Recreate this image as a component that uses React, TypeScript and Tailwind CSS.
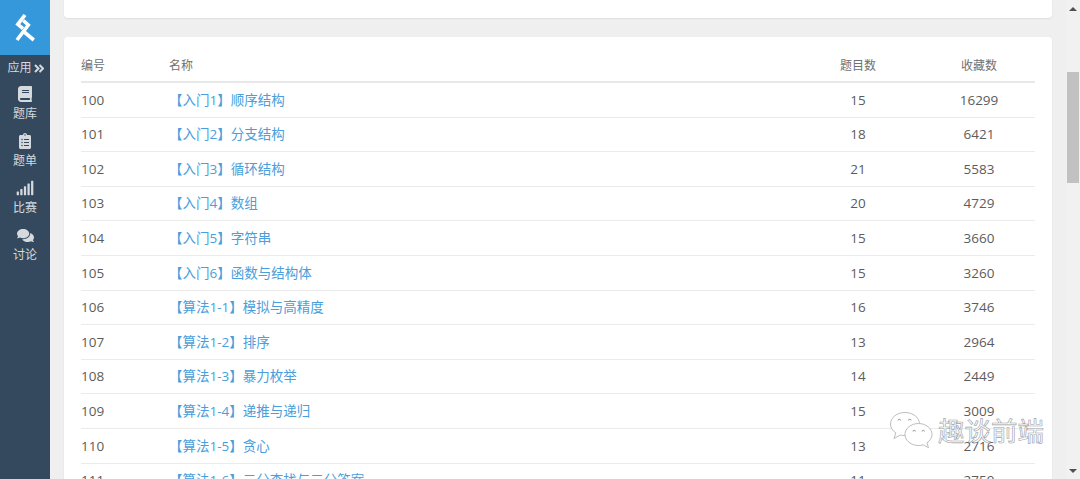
import { FaBook, FaClipboardList, FaSignal, FaComments } from 'react-icons/fa';

const rows = [
  { id: 100, name: '【入门1】顺序结构', count: 15, fav: 16299 },
  { id: 101, name: '【入门2】分支结构', count: 18, fav: 6421 },
  { id: 102, name: '【入门3】循环结构', count: 21, fav: 5583 },
  { id: 103, name: '【入门4】数组', count: 20, fav: 4729 },
  { id: 104, name: '【入门5】字符串', count: 15, fav: 3660 },
  { id: 105, name: '【入门6】函数与结构体', count: 15, fav: 3260 },
  { id: 106, name: '【算法1-1】模拟与高精度', count: 16, fav: 3746 },
  { id: 107, name: '【算法1-2】排序', count: 13, fav: 2964 },
  { id: 108, name: '【算法1-3】暴力枚举', count: 14, fav: 2449 },
  { id: 109, name: '【算法1-4】递推与递归', count: 15, fav: 3009 },
  { id: 110, name: '【算法1-5】贪心', count: 13, fav: 2716 },
  { id: 111, name: '【算法1-6】二分查找与二分答案', count: 11, fav: 2759 },
];

const navItems = [
  { label: '题库', icon: <FaBook size={16} /> },
  { label: '题单', icon: <FaClipboardList size={16} /> },
  { label: '比赛', icon: <FaSignal size={18} /> },
  { label: '讨论', icon: <FaComments size={17} /> },
];

const font = "font-['Open_Sans','Noto_Sans_CJK_SC',sans-serif]";

const Sidebar = () => (
  <aside className="w-[50px] shrink-0 bg-[#34495e] text-[#d5dade]">
    <div className="h-[55px] bg-[#3498db] flex items-center justify-center">
      <svg width="21" height="28" viewBox="15 14 21 28" fill="none" stroke="#fff" strokeWidth="3.6">
        <path d="M25 15 L17.800 24.300 L23 28.600" />
        <path d="M23.300 20.500 L28.300 25 L17 40" />
        <path d="M23 31 L33.800 40" />
      </svg>
    </div>
    <div className="h-[24px] pt-[2px] flex items-center justify-center text-[12px] gap-[2px] pl-[1px]">
      <span>应用</span>
      <svg width="10" height="9" viewBox="0 0 10 9" fill="none" stroke="currentColor" strokeWidth="2">
        <path d="M1 1 L4.500 4.500 L1 8" />
        <path d="M5.500 1 L9 4.500 L5.500 8" />
      </svg>
    </div>
    <div className="pt-[6px]">
      {navItems.map((item) => (
        <div key={item.label} className="h-[47px] flex flex-col items-center">
          <div className="h-[18px] flex items-center justify-center">{item.icon}</div>
          <span className="mt-[3px] text-[12px] leading-[16px]">{item.label}</span>
        </div>
      ))}
    </div>
  </aside>
);

const Watermark = () => (
  <div className="absolute left-[889px] top-[411px] flex items-start gap-[5px] pointer-events-none">
    <svg width="44" height="38" viewBox="0 0 44 38" fill="#ffffff" stroke="#bdbdbd" strokeWidth="1">
      <path d="M16 1.500C8 1.500 1.500 6.500 1.500 13c0 3.800 2.100 6.800 5.300 8.800L5 27.500l6.300-3.500c1.500.4 3 .6 4.700.6 8 0 14.500-5 14.500-11.600S24 1.500 16 1.500z" />
      <path d="M29.500 12.500c-7.400 0-13.500 4.900-13.500 11s6.100 11 13.500 11c1.600 0 3.100-.2 4.600-.7l5.400 2.900-1.600-5c3.200-2 5.100-5 5.100-8.200 0-6.100-6.100-11-13.500-11z" />
      <path d="M9 9.500a1.300 1.300 0 0 1 2.600 0M19.500 9.500a1.300 1.300 0 0 1 2.600 0M24 20.500a1.200 1.200 0 0 1 2.400 0M33 20.500a1.200 1.200 0 0 1 2.400 0" fill="none" stroke="#999" />
    </svg>
    <span className="mt-[6px] text-[26.500px] leading-none text-white/70 font-['Noto_Sans_CJK_SC',sans-serif] [-webkit-text-stroke:0.6px_#a0a0a0]">
      趣谈前端
    </span>
  </div>
);

export default function App() {
  return (
    <div className={`relative h-[479px] w-[1080px] overflow-hidden flex bg-[#efefef] ${font}`}>
      <Sidebar />
      <main className="flex-1 px-[14px]">
        <div className="h-[18px] bg-white rounded-b-[4px] shadow-[0_1px_2px_rgba(0,0,0,0.07)]" />
        <section className="mt-[19px] bg-white rounded-[4px] px-[17px] pt-[16px] h-[460px] shadow-[0_1px_2px_rgba(0,0,0,0.07)]">
          <div className="grid grid-cols-[88px_624px_130px_112px] h-[30px] pb-[3px] items-center text-[12px] text-[#707070] border-b-2 border-[#e8e8e8]">
            <span>编号</span>
            <span>名称</span>
            <span className="text-center">题目数</span>
            <span className="text-center">收藏数</span>
          </div>
          {rows.map((row) => (
            <div
              key={row.id}
              className="grid grid-cols-[88px_624px_130px_112px] h-[34.6px] items-center text-[13.5px] text-[#5c5c5c] border-b border-[#ebebeb]"
            >
              <span>{row.id}</span>
              <a className="text-[#4a9edb]">{row.name}</a>
              <span className="text-center">{row.count}</span>
              <span className="text-center">{row.fav}</span>
            </div>
          ))}
        </section>
      </main>
      {/* scrollbar */}
      <div className="w-[14px] shrink-0 bg-[#f1f1f1] flex flex-col items-center">
        <div className="h-[17px] flex items-center justify-center">
          <div className="w-0 h-0 border-x-[4px] border-x-transparent border-b-[4px] border-b-[#505050]" />
        </div>
        <div className="mt-[55px] h-[111px] w-[12px] bg-[#c1c1c1]" />
        <div className="flex-1" />
        <div className="h-[17px] flex items-center justify-center">
          <div className="w-0 h-0 border-x-[4px] border-x-transparent border-t-[4px] border-t-[#505050]" />
        </div>
      </div>
      <Watermark />
    </div>
  );
}
